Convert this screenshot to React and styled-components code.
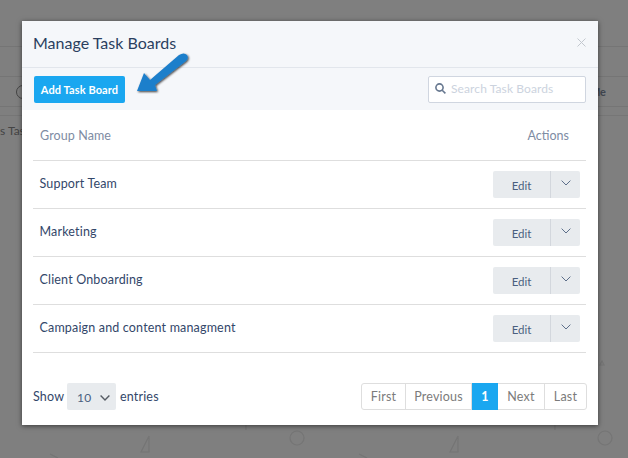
import React from "react";
import styled, { createGlobalStyle } from "styled-components";

const Global = createGlobalStyle`
  html, body { margin: 0; padding: 0; }
  body { width: 628px; height: 458px; overflow: hidden; background: #7f7f7f; font-family: Lato, "Open Sans", sans-serif; }
`;

const Page = styled.div`
  position: relative;
  width: 628px;
  height: 458px;
  overflow: hidden;
  background: #7f7f7f;
`;
const BackTopBar = styled.div`
  height: 46px;
  border-bottom: 1px solid #757575;
`;
const BackToolbar = styled.div`
  height: 29px;
  border-bottom: 1px solid #757575;
`;
const BackTabs = styled.div`
  height: 29px;
  border-bottom: 1px solid #757575;
  display: flex;
  align-items: center;
  justify-content: space-between;
  padding-right: 22px;
  font-size: 12px;
  color: #3f4650;
`;
const BackIcon = styled.span`
  width: 12px;
  height: 12px;
  margin-left: 16px;
  border: 1px solid #444;
  border-radius: 50%;
`;
const BackTabLabel = styled.span`
  font-weight: 700;
  font-size: 11px;
`;
const BackRow = styled.div`
  height: 8px;
  border-bottom: 1px solid #767676;
`;
const BackText = styled.div`
  padding: 7px 0 0;
  font-size: 12px;
  color: #444;
`;
const BackArt = styled.svg`
  position: absolute;
  left: 0;
  top: 340px;
`;

const Modal = styled.div`
  position: absolute;
  left: 22px;
  top: 21px;
  width: 576px;
  height: 404px;
  background: #fff;
  box-shadow: 0 1px 5px rgba(0, 0, 0, 0.55);
  display: flex;
  flex-direction: column;
`;
const Header = styled.header`
  height: 47px;
  box-sizing: border-box;
  background: #f5f7fa;
  border-bottom: 1px solid #e2e6ec;
  display: flex;
  align-items: center;
  justify-content: space-between;
  padding: 0 12px 3px 11px;
`;
const Title = styled.h4`
  margin: 0;
  font-size: 16px;
  font-weight: 400;
  letter-spacing: 0;
  color: #2b3f5f;
`;
const Close = styled.span`
  display: flex;
  color: #c3c8cf;
`;
const Toolbar = styled.div`
  height: 42px;
  box-sizing: border-box;
  background: #f5f7fa;
  display: flex;
  justify-content: space-between;
  align-items: flex-start;
  padding: 8px 12px 0;
`;
const AddButton = styled.button`
  width: 91px;
  height: 27px;
  padding: 0;
  border: 0;
  border-radius: 2px;
  background: #1aa7f0;
  color: #fff;
  font: 700 11px Lato, sans-serif;
  letter-spacing: 0.1px;
`;
const Arrow = styled.svg`
  position: absolute;
  left: 110px;
  top: 28px;
  overflow: visible;
`;
const Search = styled.label`
  width: 158px;
  height: 27px;
  box-sizing: border-box;
  background: #fff;
  border: 1px solid #d0d6e0;
  border-radius: 2px;
  display: flex;
  align-items: center;
  gap: 5px;
  padding: 0 6px 3px 6px;
  color: #66778f;
`;
const SearchInput = styled.input`
  border: 0;
  outline: 0;
  padding: 0;
  width: 120px;
  background: transparent;
  font: 400 12px Lato, sans-serif;
  letter-spacing: 0.1px;
  &::placeholder { color: #ccd3de; opacity: 1; }
`;
const Body = styled.div`
  padding: 0 12px 0 11px;
  flex: 1;
`;
const HeadRow = styled.div`
  height: 50px;
  border-bottom: 1px solid #dedede;
  display: flex;
  align-items: center;
  justify-content: space-between;
  padding: 0 17px 0 7px;
  font-size: 12.5px;
  letter-spacing: 0.1px;
  color: #7e8ca3;
`;
const ActionsLabel = styled.span`
  letter-spacing: 0;
`;
const Row = styled.div`
  height: 47px;
  border-bottom: 1px solid #dedede;
  display: flex;
  align-items: center;
  justify-content: space-between;
  padding: 0 6px 0 6.5px;
  font-size: 12.5px;
  letter-spacing: 0.17px;
  color: #33476a;
`;
const RowLabel = styled.span`
  margin-top: -2px;
`;
const Split = styled.div`
  display: flex;
  height: 27px;
  background: #e8ebee;
  border-radius: 2px;
`;
const EditButton = styled.button`
  width: 58px;
  border: 0;
  padding: 1px 0 0;
  background: transparent;
  border-right: 1px solid #d3d7dd;
  color: #4a5f80;
  font: 400 11.5px Lato, sans-serif;
`;
const Caret = styled.button`
  width: 29px;
  border: 0;
  padding: 0 0 3px;
  background: transparent;
  color: #5d6f8a;
  display: flex;
  align-items: center;
  justify-content: center;
`;
const Footer = styled.footer`
  display: flex;
  justify-content: space-between;
  align-items: center;
  padding: 30px 0 0;
`;
const Length = styled.div`
  display: flex;
  align-items: center;
  font-size: 12.5px;
  letter-spacing: 0.17px;
  color: #33476a;
`;
const ShowLabel = styled.span`
  width: 34px;
`;
const EntriesLabel = styled.span`
  margin-left: 4px;
`;
const FakeSelect = styled.div`
  width: 49px;
  height: 27px;
  box-sizing: border-box;
  background: #e8ebee;
  border-radius: 2px;
  display: flex;
  align-items: center;
  justify-content: space-between;
  padding: 2px 6px 0 10px;
  color: #4a5f80;
  font-size: 12px;
`;
const SelectCaret = styled.span`
  display: flex;
  color: #555b63;
`;
const Pager = styled.nav`
  display: flex;
  height: 27px;
  box-sizing: border-box;
  border: 1px solid #dedede;
  border-radius: 3px;
  margin-right: -1px;
`;
const PageItem = styled.span`
  display: flex;
  align-items: center;
  justify-content: center;
  width: ${(p) => p.$w}px;
  margin: ${(p) => (p.$active ? "-1px 0" : "0")};
  box-sizing: border-box;
  border-right: ${(p) => (p.$last || p.$active ? "0" : "1px solid #dedede")};
  background: ${(p) => (p.$active ? "#1aa7f0" : "transparent")};
  color: ${(p) => (p.$active ? "#fff" : "#7b7b7b")};
  font-size: 12.5px;
  font-weight: ${(p) => (p.$active ? 700 : 400)};
  letter-spacing: 0.2px;
`;

const rows = ["Support Team", "Marketing", "Client Onboarding", "Campaign and content managment"];
const pages = [
  { label: "First", w: 44 },
  { label: "Previous", w: 66 },
  { label: "1", w: 26, active: true },
  { label: "Next", w: 47 },
  { label: "Last", w: 41, last: true },
];

const Chevron = ({ size = 10, weight = 1 }) => (
  <svg width={size} height={size * 0.6} viewBox="0 0 10 6" fill="none" stroke="currentColor" strokeWidth={weight}>
    <path d="M.6.6 5 5 9.4.6" />
  </svg>
);

export default function App() {
  return (
    <Page>
      <Global />
      <BackTopBar />
      <BackToolbar />
      <BackTabs>
        <BackIcon />
        <BackTabLabel>Me</BackTabLabel>
      </BackTabs>
      <BackRow />
      <BackText>s Task</BackText>
      <BackArt width="628" height="118" viewBox="0 0 628 118" fill="none" stroke="#757575" strokeWidth="1.2">
        <circle cx="297" cy="98" r="7" />
        <circle cx="605" cy="98" r="7" />
        <path d="M141 112 149 96V112Z" />
        <path d="M450 112 458 96V112Z" />
        <path d="M50 114 58 118M359 114 367 118" />
        <path d="M246 85V90M555 85V90M602 21 604 25 600 25Z" />
      </BackArt>
      <Modal>
        <Header>
          <Title>Manage Task Boards</Title>
          <Close>
            <svg width="9" height="9" viewBox="0 0 9 9" stroke="currentColor" strokeWidth="1" fill="none">
              <path d="M.5.5 8.5 8.5M8.5.5.5 8.5" />
            </svg>
          </Close>
        </Header>
        <Toolbar>
          <AddButton>Add Task Board</AddButton>
          <Search>
            <svg width="11" height="11" viewBox="0 0 11 11" fill="none" stroke="currentColor" strokeWidth="1.6">
              <circle cx="4.5" cy="4.5" r="3.6" />
              <path d="M7.2 7.2 10.4 10.4" />
            </svg>
            <SearchInput placeholder="Search Task Boards" />
          </Search>
        </Toolbar>
        <Body>
          <HeadRow>
            <span>Group Name</span>
            <ActionsLabel>Actions</ActionsLabel>
          </HeadRow>
          {rows.map((r) => (
            <Row key={r}>
              <RowLabel>{r}</RowLabel>
              <Split>
                <EditButton>Edit</EditButton>
                <Caret><Chevron /></Caret>
              </Split>
            </Row>
          ))}
          <Footer>
            <Length>
              <ShowLabel>Show</ShowLabel>
              <FakeSelect>
                <span>10</span>
                <SelectCaret><Chevron size={10} weight={1.4} /></SelectCaret>
              </FakeSelect>
              <EntriesLabel>entries</EntriesLabel>
            </Length>
            <Pager>
              {pages.map((p) => (
                <PageItem key={p.label} $w={p.w} $active={p.active} $last={p.last}>{p.label}</PageItem>
              ))}
            </Pager>
          </Footer>
        </Body>
        <Arrow width="60" height="46" viewBox="0 0 60 46">
          <defs>
            <filter id="as" x="-30%" y="-30%" width="160%" height="160%">
              <feDropShadow dx="1" dy="1" stdDeviation="1.2" floodColor="#000" floodOpacity="0.75" />
            </filter>
          </defs>
          <path
            d="M5 42 12 24 18 31 47 6Q52 3 55 6 57 9 54 12L23 36 25 42Z"
            fill="#1f7fcb"
            filter="url(#as)"
          />
        </Arrow>
      </Modal>
    </Page>
  );
}
